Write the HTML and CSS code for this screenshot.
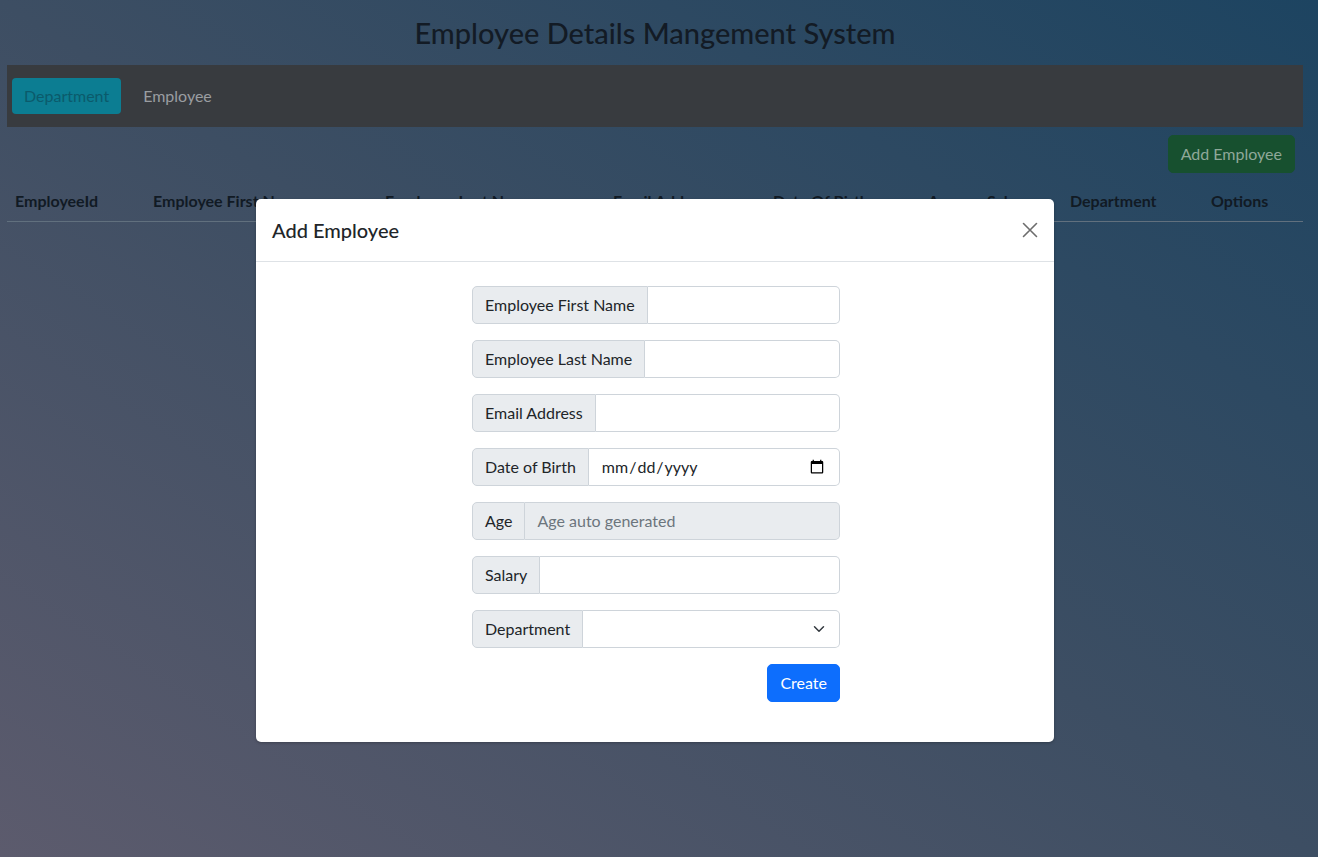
FILE: index.html
```html
<!DOCTYPE html>
<html lang="en">
<head>
<meta charset="utf-8">
<title>Employee Details Mangement System</title>
<link rel="stylesheet" href="styles.css">
</head>
<body>
<div class="page">
  <h3 class="title">Employee Details Mangement System</h3>
  <nav class="navbar">
    <a class="nav-btn active">Department</a>
    <a class="nav-btn">Employee</a>
  </nav>
  <div class="toolbar">
    <button class="btn-add" type="button">Add Employee</button>
  </div>
  <table class="table">
    <colgroup>
      <col class="c1"><col class="c2"><col class="c3"><col class="c4"><col class="c5"><col class="c6"><col class="c7"><col class="c8"><col class="c9">
    </colgroup>
    <thead>
      <tr>
        <th>EmployeeId</th>
        <th>Employee First Name</th>
        <th>Employee Last Name</th>
        <th>Email Address</th>
        <th>Date Of Birth</th>
        <th>Age</th>
        <th>Salary</th>
        <th>Department</th>
        <th>Options</th>
      </tr>
    </thead>
    <tbody></tbody>
  </table>
</div>

<div class="modal">
  <div class="modal-content">
    <div class="modal-header">
      <h5 class="modal-title">Add Employee</h5>
      <button class="btn-close" type="button" aria-label="Close">
        <svg width="16" height="16" viewBox="0 0 16 16"><path d="M1.5 1.5 L14.5 14.5 M14.5 1.5 L1.5 14.5" stroke="#6d6d6d" stroke-width="1.6" fill="none" stroke-linecap="round"/></svg>
      </button>
    </div>
    <div class="modal-body">
      <form class="form">
        <div class="input-group">
          <span class="input-group-text">Employee First Name</span>
          <input class="form-control" type="text">
        </div>
        <div class="input-group">
          <span class="input-group-text">Employee Last Name</span>
          <input class="form-control" type="text">
        </div>
        <div class="input-group">
          <span class="input-group-text">Email Address</span>
          <input class="form-control" type="text">
        </div>
        <div class="input-group">
          <span class="input-group-text">Date of Birth</span>
          <input class="form-control" type="date">
        </div>
        <div class="input-group">
          <span class="input-group-text">Age</span>
          <input class="form-control readonly" type="text" placeholder="Age auto generated" readonly>
        </div>
        <div class="input-group">
          <span class="input-group-text">Salary</span>
          <input class="form-control" type="text">
        </div>
        <div class="input-group">
          <span class="input-group-text">Department</span>
          <select class="form-select"><option></option></select>
        </div>
        <div class="actions">
          <button class="btn-create" type="button">Create</button>
        </div>
      </form>
    </div>
  </div>
</div>
</body>
</html>
```
FILE: styles.css
```css
* { box-sizing: border-box; }
html, body { margin: 0; height: 100%; }
body {
  font-family: "Segoe UI", Lato, "Noto Sans", sans-serif;
  font-size: 16px;
  line-height: 1.5;
  color: #212529;
  background: linear-gradient(to top right, #5c5b6d 0%, #3d4e63 50%, #1d4461 100%);
  min-height: 857px;
  position: relative;
  overflow: hidden;
}
.page {
  padding: 0 15px 0 7px;
}
.title {
  margin: 0;
  height: 65px;
  padding-top: 15px;
  font-size: 29px;
  font-weight: 500;
  line-height: 36px;
  text-align: center;
  color: #131b25;
}
.navbar {
  height: 62px;
  background: #383b3f;
  display: flex;
  align-items: center;
  gap: 10px;
  padding: 0 5px;
}
.nav-btn {
  padding: 6px 12px;
  line-height: 24px;
  border-radius: 4px;
  color: #9a9da1;
  font-size: 16px;
}
.nav-btn.active {
  background: #0c7d92;
  color: #0b5a6b;
}
.toolbar {
  display: flex;
  justify-content: flex-end;
  padding: 8px 8px 8px 0;
}
.btn-add {
  font: inherit;
  line-height: 24px;
  padding: 6px 12px;
  border: 1px solid #17502f;
  border-radius: 5px;
  background: #17502f;
  color: #8fa899;
}
.table {
  width: 1296px;
  border-collapse: collapse;
  table-layout: fixed;
}
.c1 { width: 138px; }
.c2 { width: 232px; }
.c3 { width: 228px; }
.c4 { width: 160px; }
.c5 { width: 155px; }
.c6 { width: 59px; }
.c7 { width: 83px; }
.c8 { width: 141px; }
.c9 { width: 100px; }
.table th {
  text-align: left;
  padding: 8px;
  font-weight: 700;
  color: #111a24;
  border-bottom: 1px solid #61707e;
  white-space: nowrap;
  overflow: hidden;
}
.modal {
  position: absolute;
  left: 256px;
  top: 199px;
  width: 798px;
}
.modal-content {
  background: #fff;
  border-radius: 5px;
  box-shadow: 0 1px 3px rgba(0,0,0,0.25);
}
.modal-header {
  display: flex;
  align-items: center;
  justify-content: space-between;
  padding: 16px;
  border-bottom: 1px solid #dee2e6;
}
.modal-title {
  margin: 0;
  font-size: 20px;
  font-weight: 500;
  line-height: 1.5;
  color: #212529;
}
.btn-close {
  border: 0;
  background: transparent;
  padding: 0;
  width: 16px;
  height: 16px;
  display: flex;
}
.modal-body {
  padding: 24px 15px 16px 17px;
}
.form {
  width: 368px;
  margin: 0 auto 24px;
}
.input-group {
  display: flex;
  height: 38px;
  margin-bottom: 16px;
}
.input-group-text {
  display: flex;
  align-items: center;
  padding: 6px 12px;
  background: #e9ecef;
  border: 1px solid #ced4da;
  border-radius: 5px 0 0 5px;
  white-space: nowrap;
  color: #212529;
  line-height: 24px;
}
.form-control, .form-select {
  flex: 1;
  min-width: 0;
  font: inherit;
  color: #212529;
  padding: 6px 12px;
  line-height: 24px;
  background: #fff;
  border: 1px solid #ced4da;
  border-left: 0;
  border-radius: 0 5px 5px 0;
  outline: none;
}
.form-control::placeholder { color: #6c757d; }
.form-control.readonly { background: #e9ecef; }
.form-select {
  appearance: none;
  -webkit-appearance: none;
  background-image: url("data:image/svg+xml,%3csvg xmlns='http://www.w3.org/2000/svg' viewBox='0 0 16 16'%3e%3cpath fill='none' stroke='%23343a40' stroke-linecap='round' stroke-linejoin='round' stroke-width='2' d='m2 5 6 6 6-6'/%3e%3c/svg%3e");
  background-repeat: no-repeat;
  background-position: right 12px center;
  background-size: 16px 12px;
}
.actions {
  display: flex;
  justify-content: flex-end;
}
.btn-create {
  font: inherit;
  line-height: 24px;
  padding: 6px 12px;
  border: 1px solid #0d6efd;
  border-radius: 5px;
  background: #0d6efd;
  color: #fff;
}
```
